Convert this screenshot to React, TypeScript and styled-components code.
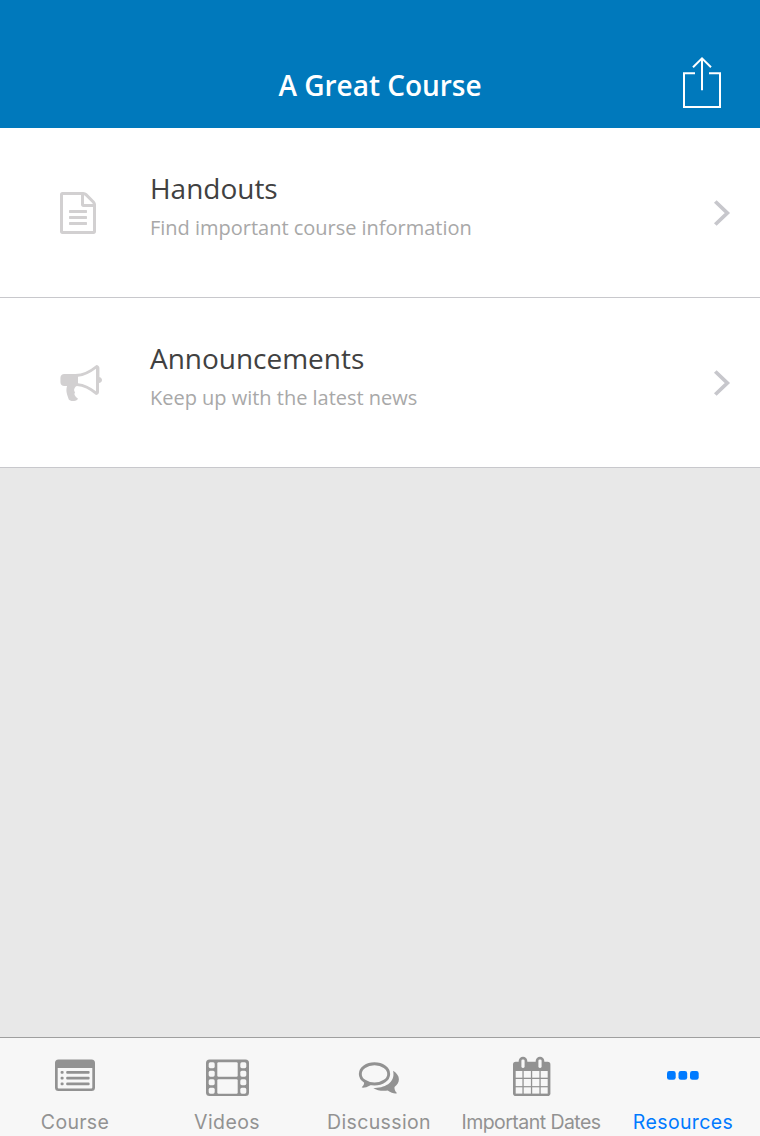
import React from "react";
import styled, { createGlobalStyle } from "styled-components";

const GlobalStyle = createGlobalStyle`
  * { box-sizing: border-box; }
  body { margin: 0; background: #e8e8e8; }
`;

const Screen = styled.div`
  width: 760px;
  height: 1136px;
  display: flex;
  flex-direction: column;
  background: #e8e8e8;
  font-family: "Open Sans", "Noto Sans", sans-serif;
  overflow: hidden;
`;

const Header = styled.header`
  height: 128px;
  flex: none;
  display: grid;
  grid-template-columns: 1fr auto 1fr;
  align-items: start;
  padding: 56px 38px 0;
  background: #0079bc;
  color: #fff;
`;

const Title = styled.h1`
  grid-column: 2;
  margin: 9px 0 0;
  font-size: 28px;
  line-height: 40px;
  font-weight: 600;
  letter-spacing: -0.02px;
  white-space: nowrap;
`;

const ShareButton = styled.button`
  justify-self: end;
  padding: 0;
  border: 0;
  background: none;
  color: inherit;
  svg { display: block; }
`;

const Row = styled.a`
  height: 170px;
  display: grid;
  grid-template-columns: 90px 1fr auto;
  align-items: center;
  padding: 0 29px 0 60px;
  background: #fff;
  border-bottom: 1px solid #c8c8cc;
  svg { display: block; }
`;

const RowIcon = styled.span`
  color: #d2d0d1;
`;

const RowText = styled.div`
  align-self: start;
  padding-top: 40px;
`;

const RowTitle = styled.div`
  font-size: 28px;
  line-height: 40px;
  letter-spacing: -0.02px;
  color: #414141;
`;

const RowSubtitle = styled.div`
  margin-top: 5px;
  font-size: 20px;
  line-height: 30px;
  letter-spacing: -0.015px;
  color: #a8a8a8;
`;

const Chevron = styled.span`
  color: #c7c7cc;
`;

const TabBar = styled.nav`
  height: 99px;
  flex: none;
  margin-top: auto;
  display: grid;
  grid-template-columns: repeat(5, 152px);
  margin-left: -1px;
  width: 761px;
  background: #f7f7f7;
  border-top: 1px solid #9f9f9f;
`;

const Tab = styled.a<{ $active?: boolean }>`
  display: flex;
  flex-direction: column;
  align-items: center;
  padding-top: 17px;
  color: ${(p) => (p.$active ? "#007aff" : "#929292")};
  svg { display: block; }
`;

const TabLabel = styled.span<{ $spacing: number }>`
  margin-top: 13px;
  font-family: Inter, "Liberation Sans", sans-serif;
  font-size: 19.5px;
  line-height: 24px;
  letter-spacing: ${(p) => p.$spacing}px;
  white-space: nowrap;
`;

const ShareIcon = () => (
  <svg width="40" height="54" viewBox="682 56 40 54" fill="none" stroke="currentColor" strokeWidth="2">
    <path d="M695 73.300H684V107H720V73.300H709M702 58V90.300M693 67.300l9-9 9 9" />
  </svg>
);

const DocumentIcon = () => (
  <svg width="36" height="42" viewBox="128 0 1536 1792" fill="currentColor">
    <path d="M1596 380q28 28 48 76t20 88v1152q0 40-28 68t-68 28h-1344q-40 0-68-28t-28-68v-1600q0-40 28-68t68-28h896q40 0 88 20t76 48zm-444-244v376h376q-10-29-22-41l-313-313q-12-12-41-22zm384 1528v-1024h-416q-40 0-68-28t-28-68v-416h-768v1536h1280zm-1024-864q0-14 9-23t23-9h704q14 0 23 9t9 23v64q0 14-9 23t-23 9h-704q-14 0-23-9t-9-23v-64zm736 224q14 0 23 9t9 23v64q0 14-9 23t-23 9h-704q-14 0-23-9t-9-23v-64q0-14 9-23t23-9h704zm0 256q14 0 23 9t9 23v64q0 14-9 23t-23 9h-704q-14 0-23-9t-9-23v-64q0-14 9-23t23-9h704z" />
  </svg>
);

const MegaphoneIcon = () => (
  <svg width="42" height="42" viewBox="0 0 1792 1792" fill="currentColor">
    <path d="M1664 640q53 0 90.500 37.500t37.500 90.500-37.500 90.500-90.500 37.500v384q0 52-38 90t-90 38q-417-347-812-380-58 19-91 66t-31 100.500 40 92.500q-20 33-23 65.500t6 58 33.500 55 48 50 61.500 50.500q-29 58-111.500 83t-168.500 11.500-113.500-55.500q-7-23-29.500-87.500t-32-94.500-23-89-15-101 3.500-98.500 22-110.500h-122q-66 0-113-47t-47-113v-192q0-66 47-113t113-47h480q435 0 896-384 52 0 90 38t38 90v384zm-128 604v-954q-394 302-768 343v270q377 42 768 341z" />
  </svg>
);

const ChevronIcon = () => (
  <svg width="18" height="28" viewBox="713 199 18 28" fill="none" stroke="currentColor" strokeWidth="3.800">
    <path d="M715.300 201.500L727.300 213l-12 11.500" />
  </svg>
);

const ListIcon = () => (
  <svg width="44" height="42" viewBox="53 1055 44 42" fill="currentColor">
    <path fillRule="evenodd" d="M58.500 1059.400h33a3.500 3.500 0 0 1 3.500 3.500v24.600a3.500 3.500 0 0 1-3.500 3.500h-33a3.500 3.500 0 0 1-3.500-3.500v-24.600a3.500 3.500 0 0 1 3.500-3.500zM57.700 1068v19.600a1 1 0 0 0 1 1h32.600a1 1 0 0 0 1-1V1068z" />
    {[1072.400, 1078.100, 1083.800].map((y) => (
      <g key={y}>
        <rect x="60.600" y={y - 1.400} width="3" height="2.800" rx="1" />
        <rect x="66.200" y={y - 1.400} width="23.400" height="2.800" rx="1" />
      </g>
    ))}
  </svg>
);

const FilmIcon = () => (
  <svg width="44" height="42" viewBox="205 1055 44 42" overflow="visible">
    <rect x="206" y="1059.400" width="43" height="36.600" rx="3.500" fill="currentColor" />
    <g fill="#f7f7f7">
      {[1062.300, 1070.800, 1079.300, 1087.800].map((y) => (
        <g key={y}>
          <rect x="208.700" y={y} width="6" height="5.900" rx="1.600" />
          <rect x="240.300" y={y} width="6" height="5.900" rx="1.600" />
        </g>
      ))}
      <rect x="217.300" y="1062.300" width="20.400" height="14.400" rx="1.200" />
      <rect x="217.300" y="1079.300" width="20.400" height="14.400" rx="1.200" />
    </g>
  </svg>
);

const ChatIcon = () => (
  <svg width="42" height="42" viewBox="358 1055 42 42" fill="currentColor">
    <ellipse cx="374.500" cy="1073.900" rx="14.200" ry="10.100" fill="none" stroke="currentColor" strokeWidth="2.900" />
    <path d="M363.800 1080.800C364.600 1083.500 364 1085.500 361.700 1087.300C362.300 1088.200 366.500 1087.600 370.500 1085.200L372 1083.500Z" />
    <path d="M393.100 1070.800C396.800 1073.100 398.900 1076 398.900 1079.300C398.900 1082.300 397.300 1085 394.500 1087.100C394.300 1089.600 395.100 1091.500 396.900 1092.900C396.400 1094.200 391.500 1093.400 387.700 1090.500C382 1091.200 377 1090.400 373.300 1088.200C383.800 1088 395.800 1083.500 393.100 1070.800Z" />
  </svg>
);

const CalendarIcon = () => (
  <svg width="40" height="42" viewBox="511 1055 40 42">
    <g fill="currentColor">
      <rect x="513" y="1061.700" width="37.400" height="34.300" rx="2.800" />
      <rect x="518.700" y="1056.700" width="8.600" height="13" rx="4.300" />
      <rect x="535.700" y="1056.700" width="8.600" height="13" rx="4.300" />
    </g>
    <g fill="#f7f7f7">
      <rect x="521.400" y="1059.400" width="3.200" height="8.500" rx="1.400" />
      <rect x="538.400" y="1059.400" width="3.200" height="8.500" rx="1.400" />
      {[[1071, 6.700], [1079, 7.100], [1087.300, 6.300]].map(([y, h]) => (
        <g key={y}>
          <rect x="515.700" y={y} width="6.700" height={h} />
          <rect x="523.700" y={y} width="7.200" height={h} />
          <rect x="532.200" y={y} width="7.200" height={h} />
          <rect x="540.700" y={y} width="7" height={h} />
        </g>
      ))}
    </g>
  </svg>
);

const MoreIcon = () => (
  <svg width="34" height="42" viewBox="666 1055 34 42" fill="currentColor">
    {[667, 678.500, 690].map((x) => (
      <rect key={x} x={x} y="1071" width="8.700" height="8.800" rx="2.400" />
    ))}
  </svg>
);

const rows = [
  { title: "Handouts", text: "Find important course information", Icon: DocumentIcon },
  { title: "Announcements", text: "Keep up with the latest news", Icon: MegaphoneIcon },
];

const tabs = [
  { label: "Course", Icon: ListIcon, spacing: 0.3 },
  { label: "Videos", Icon: FilmIcon, spacing: 0.4 },
  { label: "Discussion", Icon: ChatIcon, spacing: 0.35 },
  { label: "Important Dates", Icon: CalendarIcon, spacing: -0.55 },
  { label: "Resources", Icon: MoreIcon, spacing: 0.37, active: true },
];

export default function App() {
  return (
    <Screen>
      <GlobalStyle />
      <Header>
        <Title>A Great Course</Title>
        <ShareButton aria-label="Share">
          <ShareIcon />
        </ShareButton>
      </Header>
      <main>
        {rows.map(({ title, text, Icon }) => (
          <Row key={title}>
            <RowIcon>
              <Icon />
            </RowIcon>
            <RowText>
              <RowTitle>{title}</RowTitle>
              <RowSubtitle>{text}</RowSubtitle>
            </RowText>
            <Chevron>
              <ChevronIcon />
            </Chevron>
          </Row>
        ))}
      </main>
      <TabBar>
        {tabs.map(({ label, Icon, spacing, active }) => (
          <Tab key={label} $active={active}>
            <Icon />
            <TabLabel $spacing={spacing}>{label}</TabLabel>
          </Tab>
        ))}
      </TabBar>
    </Screen>
  );
}
